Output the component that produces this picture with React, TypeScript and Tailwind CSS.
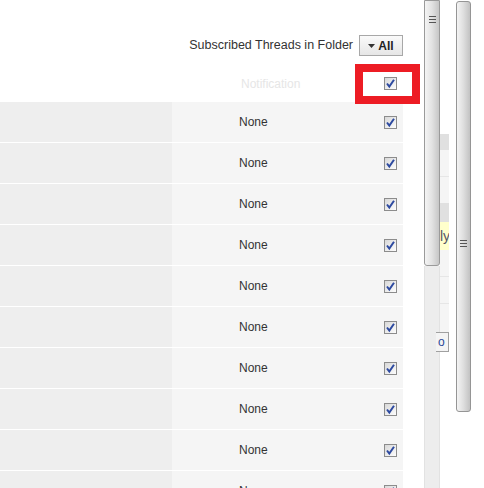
import React from "react";

function Check() {
  return (
    <svg width="13" height="13" viewBox="0 0 13 13" className="block">
      <defs>
        <linearGradient id="cbg" x1="0" y1="0" x2="1" y2="1">
          <stop offset="0" stopColor="#d6d6d6" />
          <stop offset="1" stopColor="#ffffff" />
        </linearGradient>
      </defs>
      <rect x="0.5" y="0.5" width="12" height="12" fill="url(#cbg)" stroke="#8c8c8c" />
      <path d="M3 6.5 L5.3 9.5 L10 2.8" fill="none" stroke="#2d4aa0" strokeWidth="2" />
    </svg>
  );
}

function Grip() {
  return (
    <div className="flex flex-col gap-[2px] w-[7px]">
      <div className="h-px bg-[#555]" />
      <div className="h-px bg-[#555]" />
      <div className="h-px bg-[#555]" />
    </div>
  );
}

const rows = Array.from({ length: 10 });

export default function App() {
  return (
    <div className="flex w-[484px] h-[488px] overflow-hidden bg-white font-['Liberation_Sans',Arial,sans-serif] text-[12px]">
      <div className="relative w-[424px] shrink-0">
        <div className="flex justify-end items-center h-[21px] mt-[35px] pr-[21px] gap-[6px]">
          <span className="text-[#333] text-[12.5px]">Subscribed Threads in Folder</span>
          <div className="flex items-center justify-center gap-[3px] w-[44px] h-[21px] border border-[#a8a8a8] bg-gradient-to-b from-[#fafafa] to-[#e6e6e6] font-bold text-[#222]">
            <svg width="7" height="4" viewBox="0 0 7 4"><path d="M0 0 H7 L3.5 4 Z" fill="#333" /></svg>
            <span>All</span>
          </div>
        </div>
        <div className="flex items-center h-[46px] pt-[9px] pr-[21px]">
          <div className="w-[172px]" />
          <div className="flex-1 pl-[69px] text-[#e6e6e6]">Notification</div>
          <div className="pr-[6px]"><Check /></div>
        </div>
        {rows.map((_, i) => (
          <div key={i} className="flex h-[40px] mb-px mr-[21px]">
            <div className="w-[172px] bg-[#eeeeee]" />
            <div className="flex-1 flex items-center bg-[#f5f5f5]">
              <span className="flex-1 pl-[67px] text-[#333]">None</span>
              <div className="pr-[6px]"><Check /></div>
            </div>
          </div>
        ))}
        <div className="absolute left-[355px] top-[64px] w-[65px] h-[40px] border-[8px] border-[#ed1c24]" />
      </div>

      {/* scrollbar 1 */}
      <div className="w-[16px] shrink-0 flex flex-col">
        <div className="h-[266px] border border-[#9a9a9a] rounded-b-[3px] bg-gradient-to-r from-[#f4f4f4] via-[#e2e2e2] to-[#c6c6c6] flex justify-center pt-[15px]">
          <Grip />
        </div>
        <div className="flex-1 border-x border-[#e2e2e2] bg-[#ededed]" />
      </div>

      {/* partially visible panel */}
      <div className="w-[16px] shrink-0">
        <div className="w-[9px] pt-[134px] flex flex-col">
          <div className="h-[16px] bg-[#e0e0e0]" />
          <div className="h-[27px] bg-[#f5f5f5] border-b border-[#e6e6e6]" />
          <div className="h-[26px] bg-[#f5f5f5]" />
          <div className="h-[19px] bg-[#e0e0e0]" />
          <div className="h-[28px] bg-[#ffffcc] text-[#556] text-[14px] leading-[28px] overflow-hidden whitespace-nowrap">ly</div>
          <div className="h-[27px] bg-[#f5f5f5] border-b border-[#e6e6e6]" />
          <div className="h-[27px] bg-[#f5f5f5] border-b border-[#e6e6e6]" />
          <div className="h-[28px] bg-[#f5f5f5]" />
          <div className="h-[20px] border border-[#a0a0a0] border-l-0 bg-[#f4f4f4] text-[#2a4a9a] leading-[18px] overflow-hidden whitespace-nowrap -ml-[4px] pl-0">
            <span className="ml-[2px]">o</span>
          </div>
        </div>
      </div>

      {/* scrollbar 2 */}
      <div className="w-[15px] shrink-0 pt-px">
        <div className="h-[411px] border border-[#959595] rounded-[3px] bg-gradient-to-r from-[#f4f4f4] via-[#dedede] to-[#c2c2c2] flex justify-center pt-[238px]">
          <Grip />
        </div>
      </div>
      <div className="flex-1" />
    </div>
  );
}
